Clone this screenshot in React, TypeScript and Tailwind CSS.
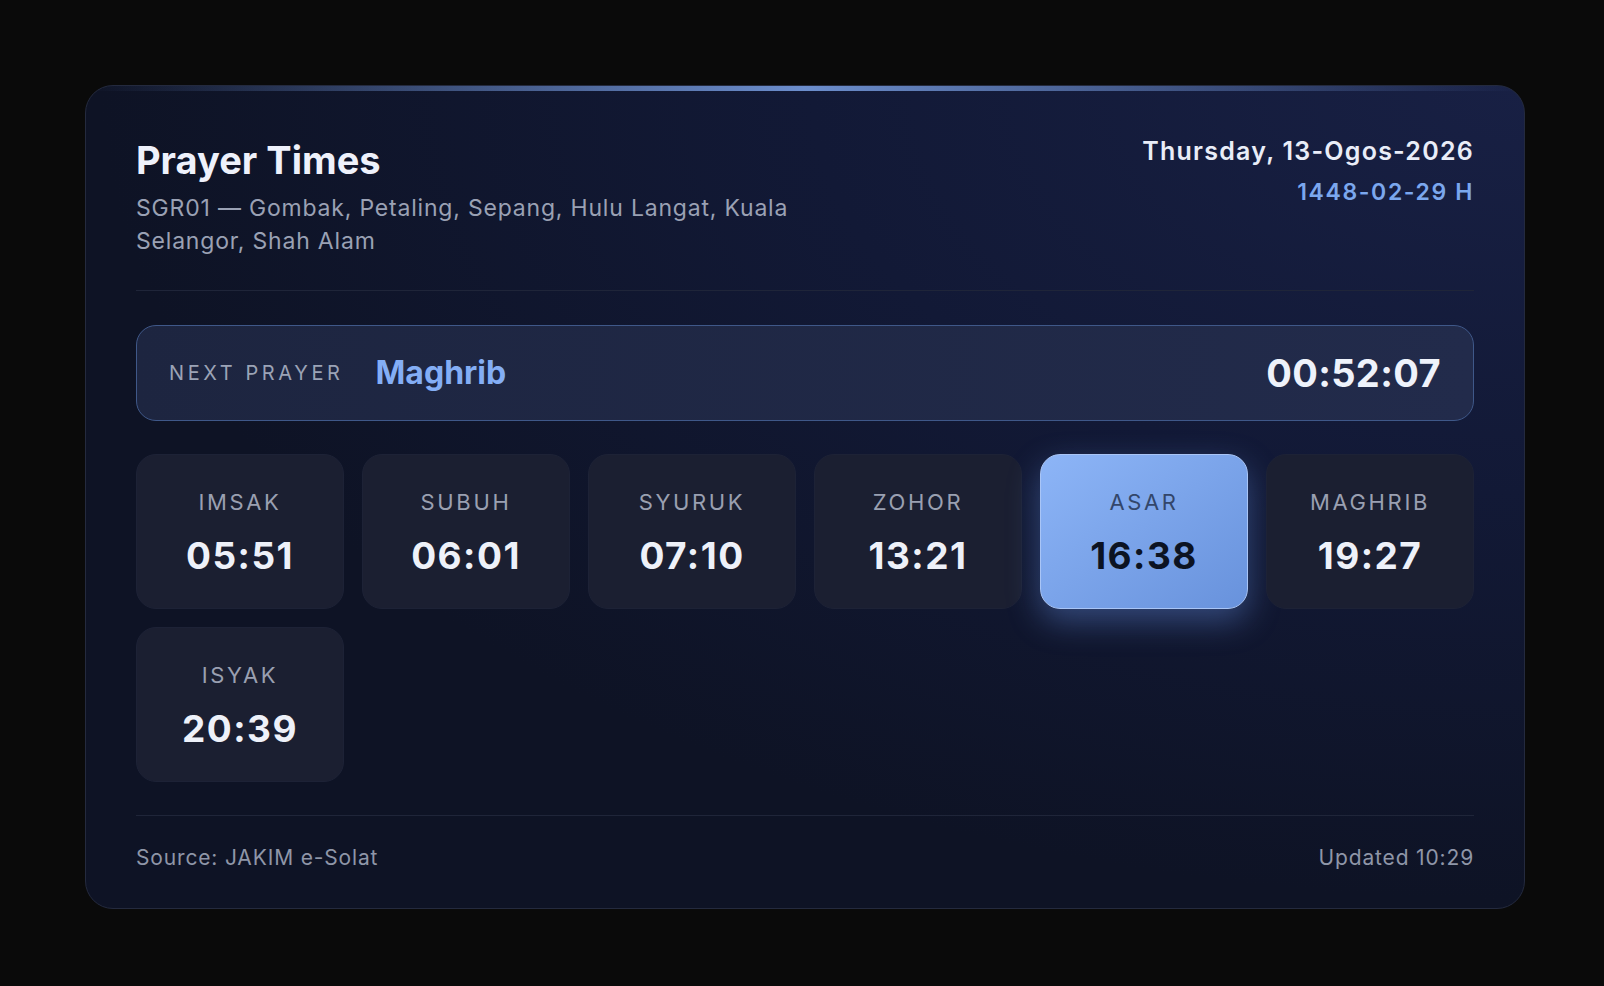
import React from "react";

type Prayer = { name: string; time: string; active?: boolean };

const PRAYERS: Prayer[] = [
    { name: "Imsak", time: "05:51" },
    { name: "Subuh", time: "06:01" },
    { name: "Syuruk", time: "07:10" },
    { name: "Zohor", time: "13:21" },
    { name: "Asar", time: "16:38", active: true },
    { name: "Maghrib", time: "19:27" },
    { name: "Isyak", time: "20:39" },
];

function PrayerTile({ prayer }: { prayer: Prayer }) {
    if (prayer.active) {
        return (
            <div className="h-[155px] rounded-[20px] border border-[#a9c5f6] bg-gradient-to-br from-[#8db5f7] to-[#6892dc] shadow-[0_12px_32px_rgba(96,136,214,0.45)] flex flex-col items-center justify-center">
                <span className="text-[22px] leading-[31px] tracking-[0.12em] uppercase text-[#33466a]">{prayer.name}</span>
                <span className="mt-4 text-[37px] leading-[43px] font-bold tracking-[0.04em] text-[#0c1322]">{prayer.time}</span>
            </div>
        );
    }
    return (
        <div className="h-[155px] rounded-[20px] border border-[#1d2236] bg-[#1b1f31] flex flex-col items-center justify-center">
            <span className="text-[22px] leading-[31px] tracking-[0.12em] uppercase text-[#9aa0b1]">{prayer.name}</span>
            <span className="mt-4 text-[37px] leading-[43px] font-bold tracking-[0.04em] text-[#eef1f9]">{prayer.time}</span>
        </div>
    );
}

export default function App() {
    return (
        <div className="min-h-screen bg-[#0a0a0a] flex items-center justify-center pl-[6px] pt-[8px] font-['Inter','Noto_Sans',sans-serif]">
            <div className="relative w-[1440px] rounded-[28px] border border-[#242a3e] bg-[#0e1325] bg-[radial-gradient(ellipse_at_top_right,#182044_0%,#121936_35%,transparent_70%)] overflow-hidden px-[50px] pt-[51px] pb-9">
                {/* top accent line */}
                <div className="absolute top-0 left-0 right-0 h-[5px] bg-gradient-to-r from-transparent via-[#6c8ecd] to-transparent" />

                {/* Header */}
                <div className="flex items-start justify-between pb-8 border-b border-[#1f2539]">
                    <div className="max-w-2xl">
                        <h1 className="text-[38px] leading-[46px] font-bold text-[#eef1fb]">Prayer Times</h1>
                        <p className="mt-[9px] text-[23px] leading-[33px] tracking-[0.035em] text-[#9aa1b4]">
                            SGR01 — Gombak, Petaling, Sepang, Hulu Langat, Kuala Selangor, Shah Alam
                        </p>
                    </div>
                    <div className="text-right -mt-1">
                        <div className="text-[25px] leading-[36px] font-semibold tracking-[0.05em] text-[#e9edf8]">Thursday, 13-Ogos-2026</div>
                        <div className="mt-2 text-[23px] leading-[30px] font-semibold tracking-[0.07em] text-[#7ba7ee]">1448-02-29 H</div>
                    </div>
                </div>

                {/* Next prayer */}
                <div className="mt-[34px] h-[96px] rounded-[20px] border border-[#3f5889] bg-gradient-to-r from-[#1d2540] to-[#222b4b] px-8 flex items-center">
                    <span className="text-[20px] tracking-[0.18em] uppercase text-[#9ba3b6]">Next Prayer</span>
                    <span className="ml-8 text-[32px] font-bold text-[#84aef5]">Maghrib</span>
                    <span className="ml-auto text-[38px] font-bold tracking-[0.01em] text-[#eef2fb]">00:52:07</span>
                </div>

                {/* Times grid */}
                <div className="mt-[33px] grid grid-cols-6 gap-[18px]">
                    {PRAYERS.map((p) => (
                        <PrayerTile key={p.name} prayer={p} />
                    ))}
                </div>

                {/* Footer */}
                <div className="mt-[33px] pt-7 border-t border-[#1f2539] flex items-center justify-between text-[21px] leading-[28px] tracking-[0.04em] text-[#8f96a8]">
                    <span>Source: JAKIM e-Solat</span>
                    <span>Updated 10:29</span>
                </div>
            </div>
        </div>
    );
}
